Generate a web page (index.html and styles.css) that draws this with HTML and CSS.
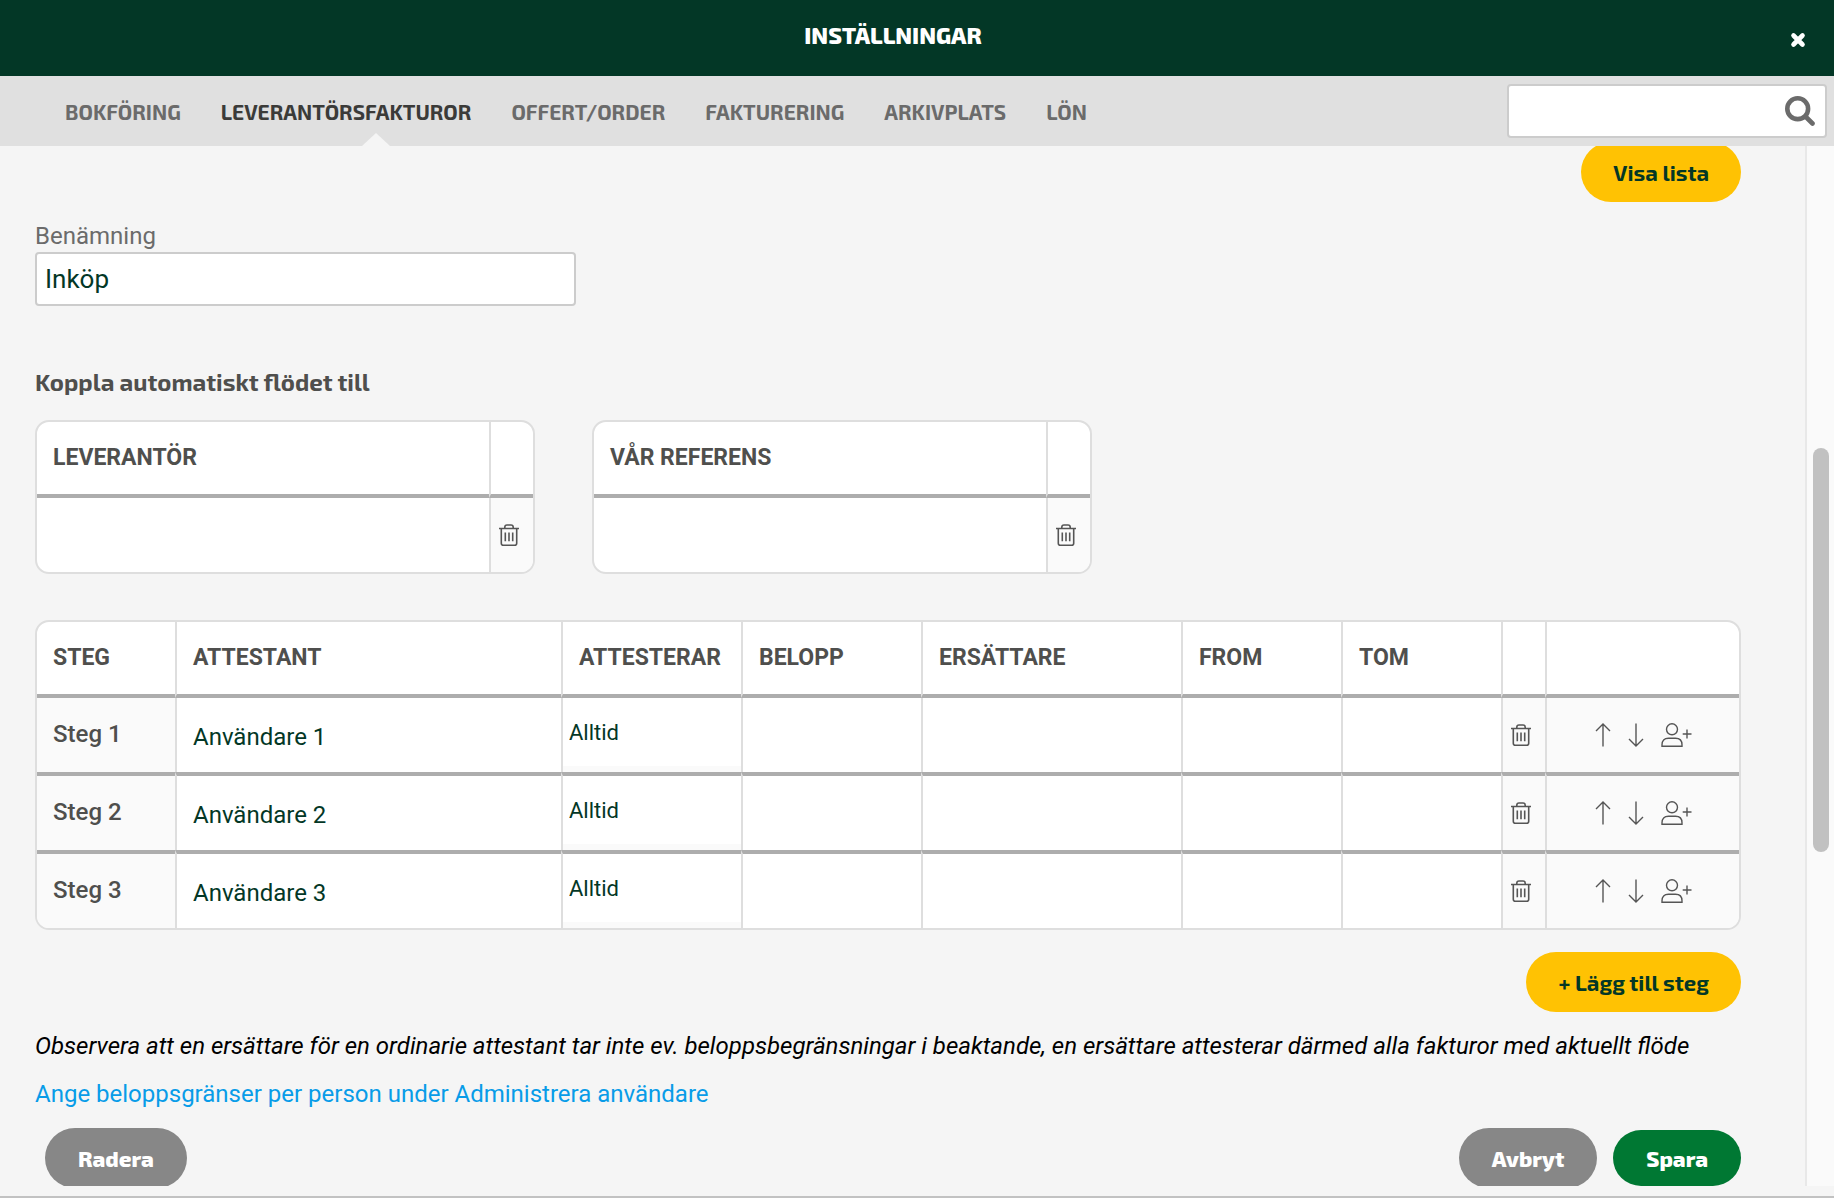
FILE: index.html
```html
<!DOCTYPE html>
<html lang="sv">
<head>
    <meta charset="UTF-8">
    <meta name="viewport" content="width=device-width, initial-scale=1.0">
    <title>Inställningar</title>
    <link rel="stylesheet" href="styles.css">
</head>
<body>
    <svg class="icon-defs" aria-hidden="true">
        <symbol id="icon-trash" viewBox="0 0 20 22">
            <path d="M0 4.500h20M5.800 4.500V3.200q0-2.200 2.200-2.200h4q2.200 0 2.200 2.200V4.500M2.300 4.500v14.700q0 2 2 2h11.400q2 0 2-2V4.500M6.300 8.500v8.700M10 8.500v8.700M13.700 8.500v8.700" fill="none" stroke="currentColor" stroke-width="1.600"/>
        </symbol>
        <symbol id="icon-up" viewBox="0 0 16 24">
            <path d="M8 23.500V1M1 8l7-7 7 7" fill="none" stroke="currentColor" stroke-width="1.400"/>
        </symbol>
        <symbol id="icon-down" viewBox="0 0 16 24">
            <path d="M8 .5V23M1 16l7 7 7-7" fill="none" stroke="currentColor" stroke-width="1.400"/>
        </symbol>
        <symbol id="icon-add-user" viewBox="0 0 31 24">
            <g fill="none" stroke="currentColor" stroke-width="1.400">
                <circle cx="11" cy="6.300" r="5.500"/>
                <path d="M1 23.300v-1.500q0-6.500 6.500-6.500h7q6.500 0 6.500 6.500v1.500zM26 6.500v9M21.700 11h8.800"/>
            </g>
        </symbol>
    </svg>

    <header class="topbar">
        <h1>INSTÄLLNINGAR</h1>
        <button class="close-btn" aria-label="Stäng">
            <svg width="16" height="16" viewBox="0 0 16 16"><path d="M3.500 3.500l9 9M12.500 3.500l-9 9" stroke="#fff" stroke-width="4.600" stroke-linecap="round"/></svg>
        </button>
    </header>

    <div class="navbar">
        <nav class="tabs">
            <a href="#">BOKFÖRING</a>
            <a href="#" class="active">LEVERANTÖRSFAKTUROR</a>
            <a href="#">OFFERT/ORDER</a>
            <a href="#">FAKTURERING</a>
            <a href="#">ARKIVPLATS</a>
            <a href="#">LÖN</a>
        </nav>
        <div class="search">
            <input type="text" aria-label="Sök">
            <svg width="30" height="30" viewBox="0 0 30 30"><circle cx="12.700" cy="12.700" r="10.400" fill="none" stroke="#6b6b6b" stroke-width="4.600"/><path d="M20.500 20.500l7 7" stroke="#6b6b6b" stroke-width="4.600" stroke-linecap="round"/></svg>
        </div>
    </div>

    <div class="viewport">
        <main class="content">
            <div class="row-right">
                <button class="btn btn-yellow">Visa lista</button>
            </div>

            <div class="field">
                <label for="name">Benämning</label>
                <input type="text" id="name" value="Inköp">
            </div>

            <h2>Koppla automatiskt flödet till</h2>

            <div class="links">
                <table class="grid">
                    <colgroup><col><col class="col-trash"></colgroup>
                    <thead>
                        <tr><th>LEVERANTÖR</th><th></th></tr>
                    </thead>
                    <tbody>
                        <tr>
                            <td><input type="text" aria-label="Leverantör"></td>
                            <td class="tool"><button class="icon-btn" aria-label="Ta bort"><svg width="20" height="22"><use href="#icon-trash"/></svg></button></td>
                        </tr>
                    </tbody>
                </table>
                <table class="grid">
                    <colgroup><col><col class="col-trash"></colgroup>
                    <thead>
                        <tr><th>VÅR REFERENS</th><th></th></tr>
                    </thead>
                    <tbody>
                        <tr>
                            <td><input type="text" aria-label="Vår referens"></td>
                            <td class="tool"><button class="icon-btn" aria-label="Ta bort"><svg width="20" height="22"><use href="#icon-trash"/></svg></button></td>
                        </tr>
                    </tbody>
                </table>
            </div>

            <table class="grid steps">
                <colgroup>
                    <col class="col-step"><col><col class="col-mid"><col class="col-mid"><col class="col-sub">
                    <col class="col-date"><col class="col-date"><col class="col-trash"><col class="col-move">
                </colgroup>
                <thead>
                    <tr>
                        <th>STEG</th>
                        <th>ATTESTANT</th>
                        <th>ATTESTERAR</th>
                        <th>BELOPP</th>
                        <th>ERSÄTTARE</th>
                        <th>FROM</th>
                        <th>TOM</th>
                        <th></th>
                        <th></th>
                    </tr>
                </thead>
                <tbody id="steps"></tbody>
            </table>

            <div class="row-right add-row">
                <button class="btn btn-yellow">+ Lägg till steg</button>
            </div>

            <p class="note">Observera att en ersättare för en ordinarie attestant tar inte ev. beloppsbegränsningar i beaktande, en ersättare attesterar därmed alla fakturor med aktuellt flöde</p>
            <a class="limit-link" href="#">Ange beloppsgränser per person under Administrera användare</a>

            <div class="actions">
                <button class="btn btn-grey btn-delete">Radera</button>
                <button class="btn btn-grey">Avbryt</button>
                <button class="btn btn-green">Spara</button>
            </div>
        </main>
        <div class="scrollbar"><div class="thumb"></div></div>
    </div>

    <script>
        const steps = ['Användare 1', 'Användare 2', 'Användare 3'];

        document.getElementById('steps').innerHTML = steps.map((user, i) => `
            <tr>
                <td class="step-name">Steg ${i + 1}</td>
                <td><input type="text" class="user" value="${user}" aria-label="Attestant"></td>
                <td class="choice"><select aria-label="Attesterar"><option>Alltid</option></select></td>
                <td><input type="text" aria-label="Belopp"></td>
                <td><input type="text" aria-label="Ersättare"></td>
                <td><input type="text" aria-label="From"></td>
                <td><input type="text" aria-label="Tom"></td>
                <td class="tool"><button class="icon-btn" aria-label="Ta bort"><svg width="20" height="22"><use href="#icon-trash"/></svg></button></td>
                <td class="tool">
                    <div class="moves">
                        <button class="icon-btn" aria-label="Flytta upp"><svg width="16" height="24"><use href="#icon-up"/></svg></button>
                        <button class="icon-btn" aria-label="Flytta ner"><svg width="16" height="24"><use href="#icon-down"/></svg></button>
                        <button class="icon-btn" aria-label="Lägg till ersättare"><svg width="31" height="24"><use href="#icon-add-user"/></svg></button>
                    </div>
                </td>
            </tr>`).join('');
    </script>
</body>
</html>
```
FILE: styles.css
```css
:root {
    --dark-green: #033726;
    --green: #007833;
    --yellow: #ffc203;
    --grey: #878787;
    --bg-color: #f5f5f5;
    --bar-color: #e0e0e0;
    --line: #dedede;
    --line-dark: #adadad;
    --text-grey: #4f4f4d;
    --heading-font: "Exo 2", "Noto Sans", sans-serif;
}

* {
    box-sizing: border-box;
    margin: 0;
    padding: 0;
}

body {
    display: flex;
    flex-direction: column;
    height: 100vh;
    overflow: hidden;
    font-family: Roboto, sans-serif;
    font-size: 24px;
    line-height: 28px;
    color: var(--dark-green);
    background: var(--bg-color);
    border-bottom: 2px solid #c2c2c2;
}

button, input, select {
    font: inherit;
    color: inherit;
    border: none;
    background: none;
}

button {
    cursor: pointer;
}

.icon-defs {
    display: none;
}

.topbar {
    display: flex;
    align-items: center;
    flex: none;
    height: 76px;
    padding-right: 28px;
    background: var(--dark-green);
    color: #fff;
}

.topbar h1 {
    flex: 1;
    padding-bottom: 6px;
    text-align: center;
    font-family: var(--heading-font);
    font-size: 23px;
    font-weight: 800;
}

.close-btn {
    display: flex;
    padding: 4px 0 0 4px;
}

.navbar {
    display: flex;
    align-items: center;
    justify-content: space-between;
    flex: none;
    height: 70px;
    padding: 0 7px 0 65px;
    background: var(--bar-color);
}

.tabs {
    display: flex;
    gap: 40px;
    height: 100%;
}

.tabs a {
    position: relative;
    padding-top: 22px;
    font-family: var(--heading-font);
    font-size: 21px;
    font-weight: 700;
    color: #6b6b6b;
    text-decoration: none;
}

.tabs .active {
    color: #3b3b39;
}

.tabs .active::after {
    content: "";
    position: absolute;
    left: 50%;
    bottom: 0;
    margin-left: 16px;
    border: solid transparent;
    border-width: 0 14px 13px;
    border-bottom-color: var(--bg-color);
}

.search {
    display: flex;
    align-items: center;
    width: 320px;
    height: 54px;
    padding-right: 10px;
    background: #fff;
    border: 2px solid #ccc;
    border-radius: 4px;
}

.search input {
    flex: 1;
    min-width: 0;
    padding: 0 8px;
}

.viewport {
    display: flex;
    flex: 1;
    min-height: 0;
    margin-bottom: 10px;
    overflow: hidden;
}

.content {
    flex: 1;
    margin-top: -4px;
    padding: 0 64px 0 35px;
}

.row-right {
    display: flex;
    justify-content: flex-end;
}

.btn {
    height: 60px;
    padding: 0 32px;
    border-radius: 30px;
    font-family: var(--heading-font);
    font-size: 22px;
    font-weight: 700;
}

.btn-yellow {
    background: var(--yellow);
}

.btn-grey, .btn-green {
    padding: 0 33px;
    font-weight: 800;
    color: #fff;
}

.btn-grey {
    background: var(--grey);
}

.btn-green {
    height: 56px;
    background: var(--green);
}

.field {
    width: 541px;
    margin-top: 20px;
}

.field label {
    display: block;
    color: #6b6b6b;
    margin-bottom: 2px;
}

.field input {
    width: 100%;
    height: 54px;
    padding: 0 8px;
    font-size: 26px;
    background: #fff;
    border: 2px solid #ccc;
    border-radius: 4px;
}

h2 {
    margin-top: 62px;
    font-family: var(--heading-font);
    font-size: 24px;
    color: var(--text-grey);
}

.links {
    display: flex;
    gap: 57px;
    margin-top: 24px;
}

.links .grid {
    width: 500px;
}

.grid {
    width: 100%;
    table-layout: fixed;
    border-collapse: separate;
    border-spacing: 0;
    background: #fff;
    border: 2px solid var(--line);
    border-radius: 14px;
    overflow: hidden;
}

.grid th {
    height: 76px;
    padding: 0 16px;
    text-align: left;
    font-size: 23px;
    color: var(--text-grey);
    border-bottom: 4px solid var(--line-dark);
}

.grid th + th, .grid td + td {
    border-left: 2px solid var(--line);
}

.grid td {
    height: 74px;
    vertical-align: middle;
}

.grid tr + tr td {
    height: 78px;
    border-top: 4px solid var(--line-dark);
}

.grid td input {
    display: block;
    width: 100%;
    height: 74px;
    padding: 4px 16px 0;
}

.grid .tool, .grid .step-name, .grid .choice {
    background: #fafafa;
}

.grid .step-name {
    padding: 0 16px 2px;
    font-weight: 500;
    color: var(--text-grey);
}

.grid .choice {
    vertical-align: top;
}

.choice select {
    display: block;
    width: 100%;
    height: 68px;
    padding: 2px 6px 0;
    appearance: none;
    font-size: 22px;
    background: #fff;
}

.col-step { width: 138px; }
.col-mid { width: 180px; }
.col-sub { width: 260px; }
.col-date { width: 160px; }
.col-trash { width: 44px; }
.col-move { width: 194px; }

.steps {
    margin-top: 46px;
}

.icon-btn {
    display: flex;
    color: #555;
}

.tool > .icon-btn {
    margin-left: 8px;
}

.moves {
    display: flex;
    gap: 17px;
    padding-left: 48px;
}

.add-row {
    margin-top: 22px;
}

.note {
    margin-top: 20px;
    font-style: italic;
    color: #000;
}

.limit-link {
    display: block;
    margin-top: 20px;
    color: #089ce8;
    text-decoration: none;
}

.actions {
    display: flex;
    align-items: center;
    gap: 16px;
    margin-top: 20px;
}

.btn-delete {
    margin-left: 10px;
    margin-right: auto;
}

.scrollbar {
    width: 29px;
    padding-top: 302px;
    background: #fafafa;
    border-left: 2px solid #e8e8e8;
}

.thumb {
    width: 16px;
    height: 404px;
    margin-left: 6px;
    border-radius: 8px;
    background: #c1c1c1;
}
```
